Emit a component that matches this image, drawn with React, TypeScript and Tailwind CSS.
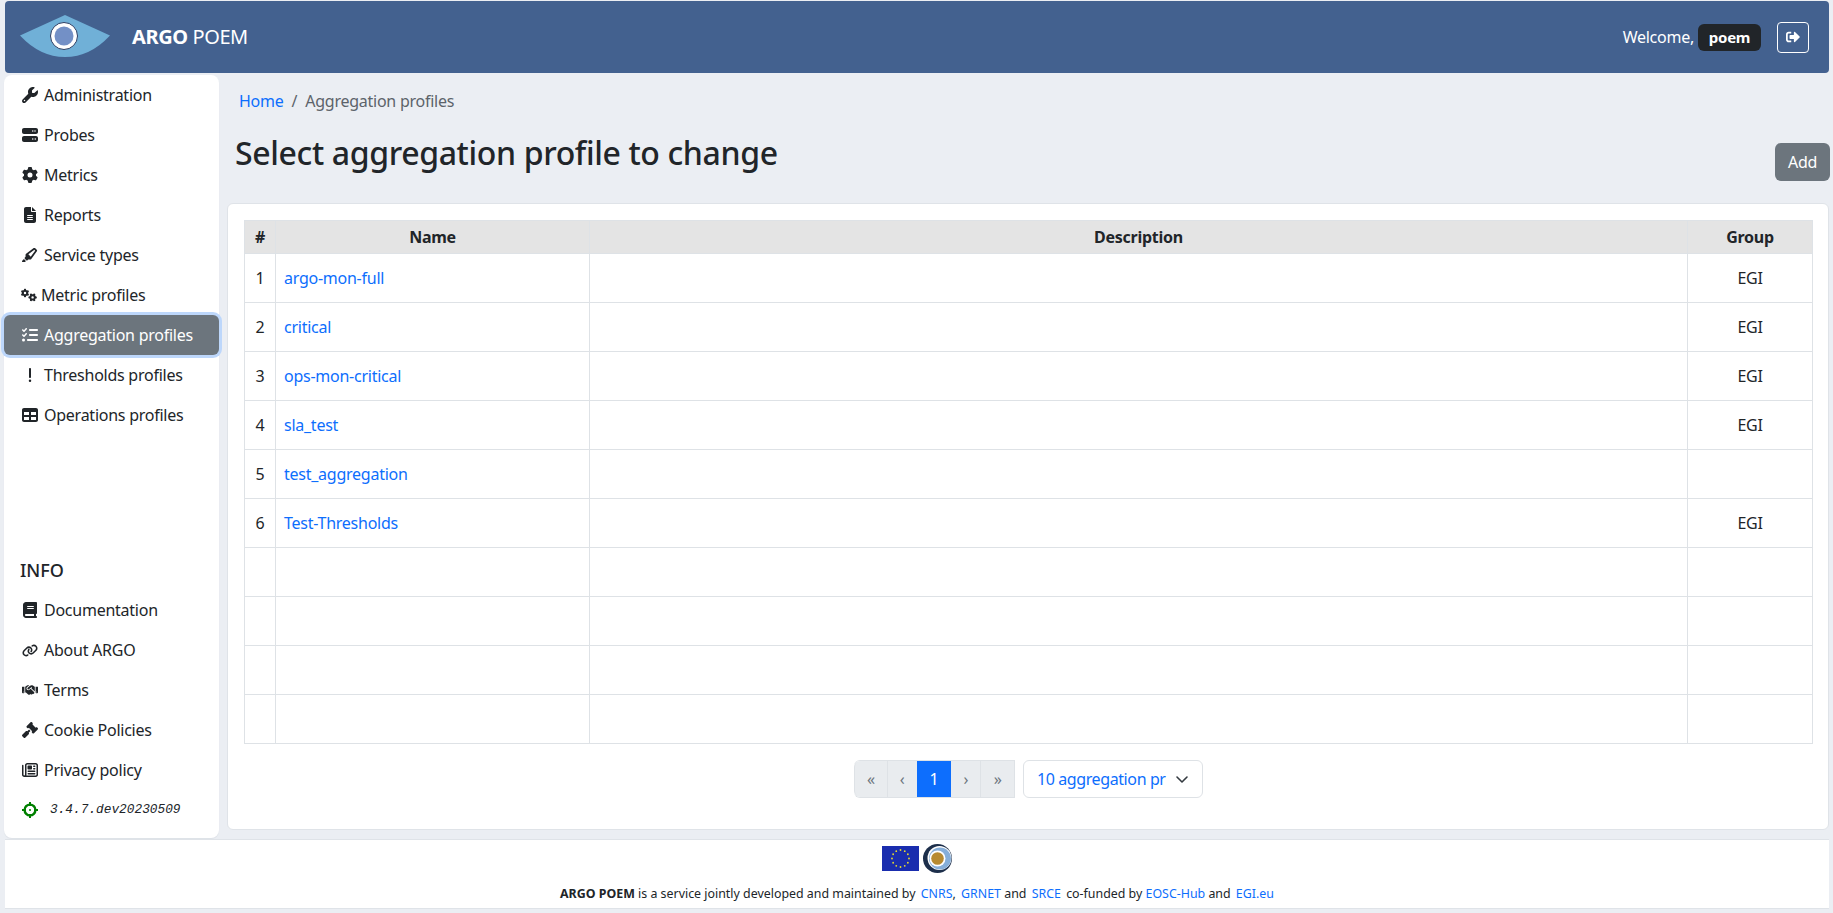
import React from 'react';
import {
    FaBook,
    FaExclamation,
    FaFileLines,
    FaGavel,
    FaGear,
    FaGears,
    FaHandshake,
    FaHighlighter,
    FaLink,
    FaRegNewspaper,
    FaServer,
    FaTable,
    FaListCheck,
    FaWrench,
} from 'react-icons/fa6';
import { FaSignOutAlt } from 'react-icons/fa';

const menuItems = [
    { label: 'Administration', icon: <FaWrench /> },
    { label: 'Probes', icon: <FaServer /> },
    { label: 'Metrics', icon: <FaGear /> },
    { label: 'Reports', icon: <FaFileLines /> },
    { label: 'Service types', icon: <FaHighlighter className="text-[18px]" /> },
    { label: 'Metric profiles', icon: <FaGears className="text-[18px]" />, narrow: true },
    { label: 'Aggregation profiles', icon: <FaListCheck /> },
    { label: 'Thresholds profiles', icon: <FaExclamation /> },
    { label: 'Operations profiles', icon: <FaTable /> },
];

const infoItems = [
    { label: 'Documentation', icon: <FaBook /> },
    { label: 'About ARGO', icon: <FaLink className="text-[19px]" /> },
    { label: 'Terms', icon: <FaHandshake className="text-[20px]" /> },
    { label: 'Cookie Policies', icon: <FaGavel /> },
    { label: 'Privacy policy', icon: <FaRegNewspaper /> },
];

const rows = [
    { id: '1', name: 'argo-mon-full', group: 'EGI' },
    { id: '2', name: 'critical', group: 'EGI' },
    { id: '3', name: 'ops-mon-critical', group: 'EGI' },
    { id: '4', name: 'sla_test', group: 'EGI' },
    { id: '5', name: 'test_aggregation', group: '' },
    { id: '6', name: 'Test-Thresholds', group: 'EGI' },
    { id: '', name: '', group: '' },
    { id: '', name: '', group: '' },
    { id: '', name: '', group: '' },
    { id: '', name: '', group: '' },
];

const ArgoLogo = () => (
    <svg width="90" height="43" viewBox="0 0 90 43" className="shrink-0">
        <path d="M0 20.5 L45 0 L90 20.5 Q70 42 45 42 Q20 42 0 20.5 Z" fill="#70b0d7" />
        <circle cx="44" cy="21" r="13.5" fill="#ffffff" stroke="#2c3e63" strokeWidth="1" />
        <circle cx="44" cy="21" r="9.5" fill="#7390c6" />
    </svg>
);

const VersionIcon = () => (
    <svg width="16" height="16" viewBox="0 0 16 16" className="shrink-0">
        <circle cx="8" cy="8" r="5.4" fill="none" stroke="#008000" strokeWidth="2.4" />
        <path d="M8 0v4M8 12v4M0 8h4M12 8h4" stroke="#008000" strokeWidth="2" />
        <circle cx="8" cy="8" r="1" fill="#008000" />
    </svg>
);

const EuFlag = () => {
    const stars = Array.from({ length: 12 }, (_, i) => {
        const angle = (i * Math.PI) / 6;
        return { cx: 18.5 + 8.5 * Math.sin(angle), cy: 12.5 - 8.5 * Math.cos(angle) };
    });
    return (
        <svg width="37" height="25" viewBox="0 0 37 25" className="shrink-0">
            <rect width="37" height="25" fill="#1a2dae" />
            {stars.map((s, i) => (
                <circle key={i} cx={s.cx} cy={s.cy} r="0.9" fill="#e9dc2c" />
            ))}
        </svg>
    );
};

const EoscLogo = () => (
    <svg width="29" height="29" viewBox="0 0 29 29" className="shrink-0">
        <circle cx="14.5" cy="14.5" r="14.5" fill="#1d2f4b" />
        <circle cx="16.5" cy="14" r="12" fill="#ffffff" />
        <circle cx="17" cy="14.5" r="11" fill="#86aed8" />
        <circle cx="14.5" cy="14.5" r="8" fill="#ffffff" />
        <circle cx="14.5" cy="14.5" r="6.3" fill="#b78a30" />
    </svg>
);

const SideLink = ({ label, icon, active, narrow }: { label: string; icon: React.ReactNode; active?: boolean; narrow?: boolean }) => (
    <div
        className={`flex items-center h-10 pl-[18px] rounded-md ${
            active ? 'bg-[#6c757d] text-white shadow-[0_0_0_3px_#bdd7fb]' : 'text-[#212529]'
        }`}
    >
        <span className={`flex items-center justify-center w-[16px] text-[16px] ${narrow ? '-ml-[1px] mr-[4px]' : 'mr-[6px]'}`}>{icon}</span>
        <span>{label}</span>
    </div>
);

const pagerClass = 'flex items-center justify-center h-full bg-[#e9ecef] text-[#6c757d] border-l border-[#dee2e6]';

export default function App() {
    return (
        <div className="h-[913px] bg-[#ebeef3] flex flex-col text-[16px] tracking-[-0.25px] text-[#212529] font-['Noto_Sans',sans-serif] overflow-hidden">
            <header className="h-[72px] mt-[1px] ml-[5px] mr-[4px] shrink-0 bg-[#43618f] rounded flex items-center text-white">
                <div className="ml-[15px] mb-[2px]">
                    <ArgoLogo />
                </div>
                <div className="ml-[22px] text-[20px] tracking-[-0.4px]">
                    <span className="font-bold">ARGO</span> POEM
                </div>
                <div className="ml-auto flex items-center mr-[20px]">
                    <span>Welcome,</span>
                    <span className="ml-[4px] w-[63px] h-[27px] bg-[#212529] rounded-md flex items-center justify-center font-bold text-[15px]">
                        poem
                    </span>
                    <button className="ml-[16px] w-[32px] h-[31px] border border-white rounded flex items-center justify-center text-[14px]">
                        <FaSignOutAlt />
                    </button>
                </div>
            </header>

            <div className="flex flex-1 min-h-0 mt-[2px]">
                <aside className="w-[215px] ml-[4px] h-[763px] shrink-0 bg-white rounded-lg shadow-[0_1px_1px_#dde1e7] flex flex-col">
                    {menuItems.map((item) => (
                        <SideLink key={item.label} {...item} active={item.label === 'Aggregation profiles'} />
                    ))}
                    <div className="mt-auto">
                        <div className="h-[40px] pl-[16px] flex items-center text-[18px] font-medium tracking-normal">INFO</div>
                        {infoItems.map((item) => (
                            <SideLink key={item.label} {...item} />
                        ))}
                        <div className="h-[40px] pl-[18px] mb-[8px] flex items-center">
                            <VersionIcon />
                            <span className="ml-[12px] text-[12.8px] tracking-normal italic font-['Liberation_Mono',monospace]">3.4.7.dev20230509</span>
                        </div>
                    </div>
                </aside>

                <main className="flex-1 min-w-0 ml-[8px] mr-[3px] flex flex-col">
                    <nav className="pl-[12px] h-[52px] pt-[14px] flex items-start leading-6">
                        <span className="text-[#0d6efd]">Home</span>
                        <span className="mx-2 text-[#5c636a]">/</span>
                        <span className="text-[#5c636a]">Aggregation profiles</span>
                    </nav>
                    <div className="flex items-start justify-between h-[76px] pl-[8px]">
                        <h2 className="text-[32px] font-medium tracking-[-0.36px] leading-[38px] mt-[7px]">Select aggregation profile to change</h2>
                        <button className="mt-[16px] w-[55px] h-[38px] bg-[#6c757d] text-white rounded-md">Add</button>
                    </div>

                    <section className="h-[627px] mr-[1px] bg-white rounded-md border border-[#dfe3e8] pt-[16px] pl-[16px] pr-[15px]">
                        <table className="w-[1568px] table-fixed border-collapse text-center">
                            <colgroup>
                                <col className="w-[31px]" />
                                <col className="w-[314px]" />
                                <col className="w-[1098px]" />
                                <col className="w-[125px]" />
                            </colgroup>
                            <thead>
                                <tr className="h-[33px] bg-[#e4e4e4] font-bold">
                                    <th className="border border-[#dee2e6] font-bold">#</th>
                                    <th className="border border-[#dee2e6] font-bold">Name</th>
                                    <th className="border border-[#dee2e6] font-bold">Description</th>
                                    <th className="border border-[#dee2e6] font-bold">Group</th>
                                </tr>
                            </thead>
                            <tbody>
                                {rows.map((row, i) => (
                                    <tr key={i} className="h-[49px]">
                                        <td className="border border-[#dee2e6]">{row.id}</td>
                                        <td className="border border-[#dee2e6] text-left pl-2 text-[#0d6efd]">{row.name}</td>
                                        <td className="border border-[#dee2e6]" />
                                        <td className="border border-[#dee2e6]">{row.group}</td>
                                    </tr>
                                ))}
                            </tbody>
                        </table>

                        <div className="flex justify-center mt-[16px] h-[38px]">
                            <div className="flex h-full w-[161px] rounded-l-md overflow-hidden border-y border-[#dee2e6] border-r">
                                <div className={`${pagerClass} w-[33px] rounded-l-md`}>«</div>
                                <div className={`${pagerClass} w-[30px]`}>‹</div>
                                <div className="flex items-center justify-center h-full w-[35px] bg-[#0d6efd] text-white">1</div>
                                <div className={`${pagerClass} w-[29px] border-l-0`}>›</div>
                                <div className={`${pagerClass} w-[34px]`}>»</div>
                            </div>
                            <div className="ml-[8px] w-[180px] h-full border border-[#dee2e6] rounded-md flex items-center pl-[13px] text-[#0d6efd] tracking-[-0.4px] relative">
                                <span className="whitespace-nowrap">10 aggregation pr</span>
                                <svg width="16" height="16" viewBox="0 0 16 16" className="absolute right-[12px] top-[10px]">
                                    <path d="M3 6l5 5 5-5" fill="none" stroke="#343a40" strokeWidth="1.6" strokeLinecap="round" strokeLinejoin="round" />
                                </svg>
                            </div>
                        </div>
                    </section>
                </main>
            </div>

            <footer className="h-[70px] ml-[5px] mr-[4px] mb-[4px] shrink-0 bg-white border-y border-[#dfe3e8] flex flex-col items-center">
                <div className="flex items-center gap-[4px] mt-[4px] h-[29px]">
                    <EuFlag />
                    <EoscLogo />
                </div>
                <p className="mt-[12px] text-[12.4px] tracking-normal leading-[18px]">
                    <span className="font-bold">ARGO POEM</span> is a service jointly developed and maintained by{' '}
                    <span className="text-[#0d6efd] ml-[2px]">CNRS</span>, <span className="text-[#0d6efd] ml-[2px]">GRNET</span> and{' '}
                    <span className="text-[#0d6efd] ml-[2px]">SRCE</span> <span className="ml-[2px]">co-funded by</span>{' '}
                    <span className="text-[#0d6efd]">EOSC-Hub</span> and <span className="text-[#0d6efd] ml-[2px]">EGI.eu</span>
                </p>
            </footer>
        </div>
    );
}
